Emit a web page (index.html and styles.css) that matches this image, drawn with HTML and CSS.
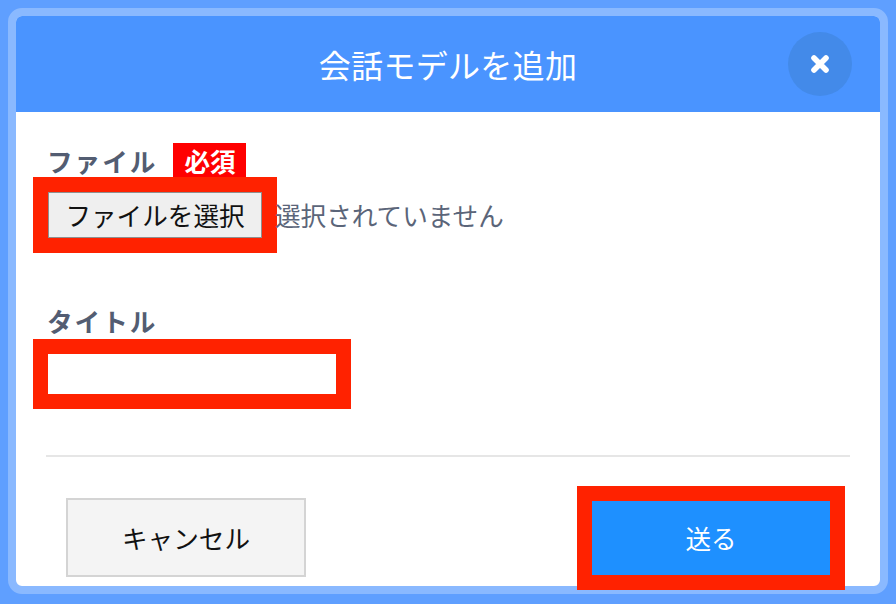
FILE: index.html
```html
<!DOCTYPE html>
<html lang="ja">
<head>
<meta charset="utf-8">
<title>会話モデルを追加</title>
<link rel="stylesheet" href="styles.css">
</head>
<body>
<div class="modal">
  <header class="modal-header">
    <span class="spacer"></span>
    <h1 class="modal-title">会話モデルを追加</h1>
    <button class="close-btn" aria-label="閉じる">
      <svg width="20" height="20" viewBox="0 0 20 20" aria-hidden="true">
        <path d="M4 4 L16 16 M16 4 L4 16" stroke="#fff" stroke-width="5.6" stroke-linecap="round" fill="none"/>
      </svg>
    </button>
  </header>
  <div class="modal-body">
    <div class="label-row">
      <span class="label">ファイル</span>
      <span class="badge">必須</span>
    </div>
    <div class="file-row">
      <button class="file-btn annotated">ファイルを選択</button>
      <span class="file-status">選択されていません</span>
    </div>
    <div class="label-row label-row-title">
      <span class="label">タイトル</span>
    </div>
    <input class="text-input annotated" type="text">
    <div class="divider"></div>
    <div class="footer">
      <button class="btn btn-cancel">キャンセル</button>
      <button class="btn btn-send annotated">送る</button>
    </div>
  </div>
</div>
</body>
</html>
```

FILE: styles.css
```css
* {
  box-sizing: border-box;
}

html, body {
  margin: 0;
  padding: 0;
}

body {
  width: 896px;
  height: 604px;
  background: #5f9fff;
  padding: 8px;
  font-family: "Noto Sans CJK JP", "Noto Sans", sans-serif;
  overflow: hidden;
}

.modal {
  width: 880px;
  height: 586px;
  border: 8px solid #8ab9ff;
  border-radius: 14px;
  background: #ffffff;
  display: flex;
  flex-direction: column;
}

.modal-header {
  height: 96px;
  flex: none;
  background: #4a94ff;
  border-radius: 6px 6px 0 0;
  display: grid;
  grid-template-columns: 1fr auto 1fr;
  align-items: center;
}

.modal-title {
  margin: 0;
  font-size: 32px;
  font-weight: 400;
  color: #ffffff;
  line-height: 1;
  letter-spacing: 0.3px;
}

.close-btn {
  justify-self: end;
  margin-right: 28px;
  width: 64px;
  height: 64px;
  border: none;
  border-radius: 50%;
  background: #438ae9;
  padding: 0;
  display: flex;
  align-items: center;
  justify-content: center;
}

.close-btn svg {
  display: block;
}

.modal-body {
  flex: 1;
  padding: 31px 30px 0 30px;
  display: flex;
  flex-direction: column;
}

.label-row {
  display: flex;
  align-items: center;
  height: 36px;
  gap: 16px;
}

.label-row-title {
  margin-top: 65px;
}

.label {
  font-size: 25.6px;
  font-weight: 700;
  color: #535d72;
  line-height: 36px;
  padding-left: 1px;
  letter-spacing: 2px;
}

.badge {
  height: 36px;
  line-height: 36px;
  padding: 0 10px 0 11px;
  background: #ff0000;
  color: #ffffff;
  font-size: 25.6px;
  font-weight: 700;
}

.annotated {
  outline: 15px solid #ff2200;
}

.file-row {
  margin-top: 13px;
  display: flex;
  align-items: center;
}

.file-btn {
  margin-left: 2px;
  width: 214px;
  height: 46px;
  padding: 0;
  background: #efefef;
  border: 1px solid #8f8f8f;
  border-radius: 0;
  font-family: inherit;
  font-size: 25.6px;
  color: #111111;
  line-height: 1;
}

.file-status {
  margin-left: 13px;
  font-size: 25.6px;
  color: #5b6579;
  line-height: 1;
}

.text-input {
  margin-top: 15px;
  margin-left: 2px;
  width: 288px;
  height: 40px;
  border: none;
  border-radius: 0;
  background: #ffffff;
  padding: 0 8px;
  font-family: inherit;
  font-size: 20px;
}

.divider {
  margin-top: 61px;
  height: 2px;
  background: #e6e6e6;
  flex: none;
}

.footer {
  margin-top: 41px;
  height: 79px;
  padding: 0 20px;
  display: flex;
  align-items: center;
  justify-content: space-between;
}

.btn {
  font-family: inherit;
  font-size: 25.6px;
  line-height: 1;
  padding: 0;
  border-radius: 0;
}

.btn-cancel {
  width: 240px;
  height: 79px;
  background: #f4f4f4;
  border: 2px solid #d4d4d4;
  color: #111111;
}

.btn-send {
  width: 238px;
  height: 74px;
  background: #1e90ff;
  border: none;
  color: #ffffff;
}
```
